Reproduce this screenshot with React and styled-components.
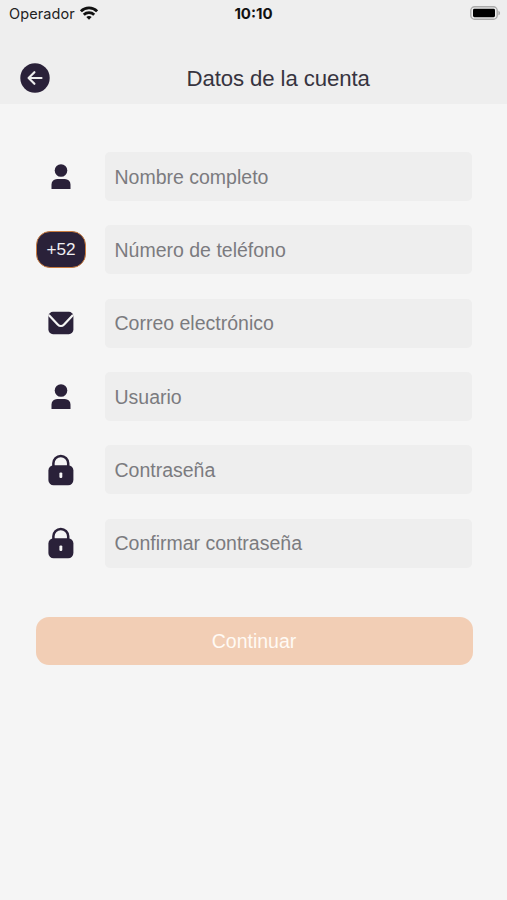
import React from 'react';
import styled, { createGlobalStyle } from 'styled-components';

const ink = '#2a2139';

const GlobalStyle = createGlobalStyle`
  * { box-sizing: border-box; }
  body {
    margin: 0;
    background: #f5f5f5;
    font-family: "Liberation Sans", Arial, sans-serif;
  }
`;

const Screen = styled.div`
  display: flex;
  flex-direction: column;
  width: 507px;
  height: 900px;
  overflow: hidden;
  background: #f5f5f5;
`;

const Header = styled.header`
  height: 104px;
  flex: none;
  background: #eeeeee;
`;

const StatusBar = styled.div`
  display: grid;
  grid-template-columns: 1fr auto 1fr;
  align-items: center;
  height: 27px;
  padding: 0 6px 0 9px;
  font-family: Inter, sans-serif;
  font-size: 14.5px;
  line-height: 20px;
  color: #222;
`;

const Carrier = styled.div`
  display: flex;
  align-items: center;
  gap: 5px;
  letter-spacing: 0.1px;
  svg { display: block; margin-top: -2px; }
`;

const Clock = styled.div`
  margin-right: 3px;
  font-size: 15px;
  font-weight: 700;
  color: #111;
`;

const Battery = styled.svg`
  display: block;
  justify-self: end;
  margin-top: -1px;
`;

const TitleBar = styled.div`
  display: flex;
  align-items: center;
  height: 77px;
  padding: 25px 20px 0;
`;

const BackButton = styled.button`
  display: block;
  width: 30px;
  height: 30px;
  padding: 0;
  border: 0;
  background: none;
  svg { display: block; }
`;

const Title = styled.h1`
  margin: 0 0 0 136.5px;
  padding-top: 1px;
  font-size: 22.2px;
  line-height: 26px;
  font-weight: 400;
  letter-spacing: -0.1px;
  white-space: nowrap;
  color: #37343f;
`;

const Form = styled.form`
  display: flex;
  flex-direction: column;
  padding: 48.2px 34.5px 0 35.5px;
`;

const Fields = styled.div`
  display: grid;
  grid-template-rows: repeat(6, 49px);
  row-gap: 24.3px;
`;

const Row = styled.label`
  display: grid;
  grid-template-columns: 51px 367.5px;
  column-gap: 18px;
  align-items: center;
`;

const IconSlot = styled.span`
  display: flex;
  justify-content: center;
  svg { display: block; }
`;

const Prefix = styled.span`
  display: flex;
  align-items: center;
  justify-content: center;
  width: 50px;
  height: 37px;
  border: 1.5px solid #c87a3e;
  border-radius: 14px;
  background: ${ink};
  color: #f0eef3;
  font-size: 17.2px;
`;

const Input = styled.input`
  width: 100%;
  height: 100%;
  padding: 1px 10px 0;
  border: 0;
  border-radius: 5px;
  outline: 0;
  background: #eeeeee;
  color: ${ink};
  font: 400 19.5px "Liberation Sans", Arial, sans-serif;
  &::placeholder { color: #7b7b7f; opacity: 1; }
`;

const Submit = styled.button`
  width: 437px;
  height: 48.5px;
  margin-top: 49px;
  padding: 1px 0 0;
  border: 0;
  border-radius: 13px;
  background: #f2ceb5;
  color: #fffaf4;
  font: 400 19.5px "Liberation Sans", Arial, sans-serif;
`;

const WifiIcon = () => (
  <svg width="18" height="14" viewBox="0 0 18 14" fill="none" stroke="#111" strokeWidth="2.8">
    <path d="M.9 5.3C5.4 .7 12.6 .7 17.1 5.3" />
    <path d="M3.8 8.7c2.9-2.8 7.5-2.8 10.4 0" />
    <path d="M6.3 11.1c1.5-1.4 3.9-1.4 5.4 0L9 13.8z" fill="#111" stroke="none" />
  </svg>
);

const BatteryIcon = () => (
  <Battery width="31" height="14" viewBox="0 0 31 14">
    <rect x=".8" y=".8" width="26.4" height="12.4" rx="3.8" fill="#eee" stroke="#aaa" strokeWidth="1.4" />
    <rect x="3" y="2.8" width="22" height="8.4" rx="1.4" fill="#000" />
    <path d="M28.4 4.7c2.2.8 2.2 3.8 0 4.6z" fill="#aaa" />
  </Battery>
);

const BackIcon = () => (
  <svg width="30" height="30" viewBox="0 0 30 30">
    <circle cx="15" cy="15" r="14.7" fill={ink} />
    <path d="M21.5 15H9M14.4 9.2L8.6 15l5.8 5.8" fill="none" stroke="#eee" strokeWidth="2.2" strokeLinecap="round" strokeLinejoin="round" />
  </svg>
);

const PersonIcon = () => (
  <svg width="26" height="32" viewBox="0 0 26 32" fill={ink}>
    <circle cx="13" cy="9.5" r="6.3" />
    <path d="M3.5 27.9v-4.4a5.6 5.6 0 0 1 5.6-5.6h7.8a5.6 5.6 0 0 1 5.6 5.6v4.4z" />
  </svg>
);

const MailIcon = () => (
  <svg width="26" height="24" viewBox="0 0 26 24">
    <rect x=".4" y=".8" width="25" height="22.4" rx="4.6" fill={ink} />
    <path d="M.8 4l8.9 9.4c2 2.1 4.4 2.1 6.4 0L25 4" fill="none" stroke="#f5f5f5" strokeWidth="2.2" />
  </svg>
);

const LockIcon = () => (
  <svg width="26" height="32" viewBox="0 0 26 32">
    <path d="M5.4 13V9.3a7.4 7.4 0 0 1 14.8 0V13" fill="none" stroke={ink} strokeWidth="2.5" />
    <rect x=".4" y="11.2" width="25" height="20" rx="5.2" fill={ink} />
    <rect x="11.4" y="18.4" width="2.9" height="5.6" rx="1.2" fill="#f5f5f5" />
  </svg>
);

const fields = [
  { label: 'Nombre completo', type: 'text', icon: <PersonIcon /> },
  { label: 'Número de teléfono', type: 'tel', icon: <Prefix>+52</Prefix> },
  { label: 'Correo electrónico', type: 'email', icon: <MailIcon /> },
  { label: 'Usuario', type: 'text', icon: <PersonIcon /> },
  { label: 'Contraseña', type: 'password', icon: <LockIcon /> },
  { label: 'Confirmar contraseña', type: 'password', icon: <LockIcon /> },
];

export default function App() {
  return (
    <>
      <GlobalStyle />
      <Screen>
        <Header>
          <StatusBar>
            <Carrier>Operador <WifiIcon /></Carrier>
            <Clock>10:10</Clock>
            <BatteryIcon />
          </StatusBar>
          <TitleBar>
            <BackButton type="button" aria-label="Atrás"><BackIcon /></BackButton>
            <Title>Datos de la cuenta</Title>
          </TitleBar>
        </Header>
        <Form>
          <Fields>
            {fields.map(({ label, type, icon }) => (
              <Row key={label}>
                <IconSlot>{icon}</IconSlot>
                <Input type={type} placeholder={label} />
              </Row>
            ))}
          </Fields>
          <Submit type="button">Continuar</Submit>
        </Form>
      </Screen>
    </>
  );
}
